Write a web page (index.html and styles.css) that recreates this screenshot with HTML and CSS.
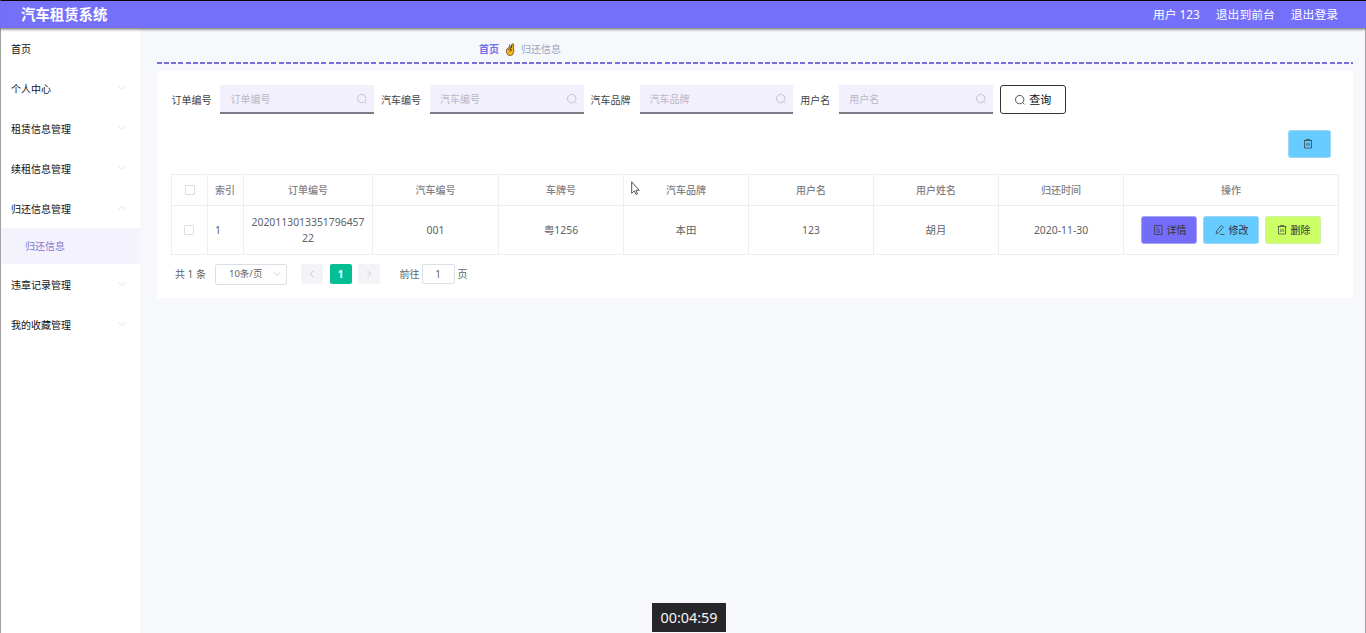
FILE: index.html
```html
<!DOCTYPE html>
<html lang="zh-CN">
<head>
<meta charset="utf-8">
<title>汽车租赁系统</title>
<link rel="stylesheet" href="styles.css">
</head>
<body>
<svg class="defs" width="0" height="0" aria-hidden="true">
  <symbol id="search" viewBox="0 0 12 12"><circle cx="5.7" cy="5.6" r="4.2"/><path d="M8.8 8.7l1.7 1.7"/></symbol>
  <symbol id="down" viewBox="0 0 12 12"><path d="M2.5 4.2L6 7.4l3.500-3.200"/></symbol>
  <symbol id="up" viewBox="0 0 12 12"><path d="M2.500 7.400L6 4.200l3.500 3.200"/></symbol>
  <symbol id="left" viewBox="0 0 12 12"><path d="M7.600 2.800L4.400 6l3.200 3.200"/></symbol>
  <symbol id="right" viewBox="0 0 12 12"><path d="M4.400 2.800L7.600 6 4.400 9.200"/></symbol>
  <symbol id="trash" viewBox="0 0 12 12"><path d="M1.800 2.500h8.400M4.300 2.500v-1h3.400v1M2.500 2.500v7.500h7v-7.500M4.900 4.800v3.200M7.100 4.800v3.200"/></symbol>
  <symbol id="doc" viewBox="0 0 12 12"><path d="M2.500 1.500h7.500v9h-7.500zM4.500 4h2M4.500 6h3.500M4.500 8h3.500"/></symbol>
  <symbol id="edit" viewBox="0 0 12 12"><path d="M2.200 9.800l.4-2.900 4.600-5.400 2.100 1.700-4.600 5.500zM6 10.500h4.500"/></symbol>
</svg>
<div class="app">
  <header class="header">
    <h1 class="brand">汽车租赁系统</h1>
    <nav class="account"><span>用户 123</span><span>退出到前台</span><span>退出登录</span></nav>
  </header>
  <div class="body">
    <aside class="sidebar">
      <div class="menu-item">首页</div>
      <div class="menu-item">个人中心<svg class="icon arrow"><use href="#down"/></svg></div>
      <div class="menu-item">租赁信息管理<svg class="icon arrow"><use href="#down"/></svg></div>
      <div class="menu-item">续租信息管理<svg class="icon arrow"><use href="#down"/></svg></div>
      <div class="menu-item">归还信息管理<svg class="icon arrow"><use href="#up"/></svg></div>
      <div class="submenu-item">归还信息</div>
      <div class="menu-item">违章记录管理<svg class="icon arrow"><use href="#down"/></svg></div>
      <div class="menu-item">我的收藏管理<svg class="icon arrow"><use href="#down"/></svg></div>
    </aside>
    <main class="main">
      <div class="breadcrumb">
        <span class="crumb-home">首页</span>
        <svg class="hand" viewBox="0 0 10 13"><path d="M1.500 6.500L3.500 4.500 6 4l.8-2.800L8.300.8l.5 1.500-.5 2.200.6 3.500L7.500 11.800 5.500 12.500 3 12 1.500 9.500z" fill="#f9b820" stroke="#4a3418" stroke-width=".7"/><path d="M4.200 1.500l1 2.500M3 6.500l3-.8.500 1.600-2.200 1M6.800 2.500l-.3 2.500" fill="none" stroke="#4a3418" stroke-width=".9"/></svg>
        <span class="crumb-current">归还信息</span>
      </div>
      <section class="card">
        <form class="filters">
          <label class="field">订单编号<span class="input-box"><input placeholder="订单编号"><svg class="icon"><use href="#search"/></svg></span></label>
          <label class="field">汽车编号<span class="input-box"><input placeholder="汽车编号"><svg class="icon"><use href="#search"/></svg></span></label>
          <label class="field">汽车品牌<span class="input-box"><input placeholder="汽车品牌"><svg class="icon"><use href="#search"/></svg></span></label>
          <label class="field">用户名<span class="input-box"><input placeholder="用户名"><svg class="icon"><use href="#search"/></svg></span></label>
          <button type="button" class="query"><svg class="icon"><use href="#search"/></svg>查询</button>
        </form>
        <div class="toolbar"><button type="button" class="btn blue bulk"><svg class="icon"><use href="#trash"/></svg></button></div>
        <div class="table">
          <div class="row head">
            <div class="cell check"><i class="box"></i></div><div class="cell index">索引</div><div class="cell">订单编号</div><div class="cell">汽车编号</div><div class="cell">车牌号</div><div class="cell">汽车品牌</div><div class="cell">用户名</div><div class="cell">用户姓名</div><div class="cell">归还时间</div><div class="cell">操作</div>
          </div>
          <div class="row data">
            <div class="cell check"><i class="box"></i></div><div class="cell index">1</div><div class="cell">2020113013351796457<br>22</div><div class="cell">001</div><div class="cell">粤1256</div><div class="cell">本田</div><div class="cell">123</div><div class="cell">胡月</div><div class="cell">2020-11-30</div>
            <div class="cell actions">
              <button type="button" class="btn purple"><svg class="icon"><use href="#doc"/></svg>详情</button>
              <button type="button" class="btn blue"><svg class="icon"><use href="#edit"/></svg>修改</button>
              <button type="button" class="btn lime"><svg class="icon"><use href="#trash"/></svg>删除</button>
            </div>
          </div>
        </div>
        <div class="pagination">
          <span class="total">共 1 条</span>
          <span class="page-size">10条/页<svg class="icon"><use href="#down"/></svg></span>
          <span class="pager prev"><svg class="icon"><use href="#left"/></svg></span>
          <span class="pager current">1</span>
          <span class="pager"><svg class="icon"><use href="#right"/></svg></span>
          <span class="goto">前往</span><span class="page-input">1</span><span class="unit">页</span>
        </div>
      </section>
    </main>
  </div>
</div>
<svg class="cursor" viewBox="0 0 9 15"><path d="M.7.800v11.500l2.600-2.400 1.700 3.600 1.500-.7-1.600-3.500h3.300z" fill="#fff" stroke="#444" stroke-width=".9"/></svg>
<div class="timer">00:04:59</div>
</body>
</html>
```
FILE: styles.css
```css
* { box-sizing: border-box; }
body {
  margin: 0;
  font: 10px/16px "Noto Sans", "Noto Sans CJK SC", sans-serif;
  color: #606266;
  overflow: hidden;
}
.defs { position: absolute; }
.icon { width: 12px; height: 12px; flex: none; fill: none; stroke: currentColor; stroke-width: .7; }
.app {
  height: 633px;
  display: flex;
  flex-direction: column;
  border: solid #a2a2a5;
  border-width: 0 1px;
  background: #f6f8fc;
}
.header {
  height: 28px;
  flex: none;
  display: flex;
  align-items: center;
  justify-content: space-between;
  padding: 0 28px 2px 20px;
  margin: 0 -1px;
  border-top: 1px solid #08070f;
  border-left: 1px solid #736ef8;
  background: #7570fa;
  color: #fff;
  box-shadow: 0 1px 3px rgba(0, 0, 0, .65);
  z-index: 1;
}
.brand { margin: 0; padding-top: 2px; font-size: 14.4px; line-height: 20px; font-weight: 700; }
.account { display: flex; gap: 16px; font-size: 11.8px; }
.body { flex: 1; display: flex; }
.sidebar { width: 139px; background: #fff; color: #111; }
.menu-item { height: 40px; display: flex; align-items: center; justify-content: space-between; padding: 1px 12px 0 10px; }
.arrow { color: #d4d6dc; margin-top: -2px; }
.submenu-item { height: 36px; line-height: 36px; padding-left: 24px; background: #f4f2fd; color: #8278d4; }
.main { flex: 1; padding: 0 12px 0 17px; }
.breadcrumb {
  height: 36px;
  padding: 6px 0 0 322px;
  display: flex;
  align-items: center;
  gap: 6px;
  background: repeating-linear-gradient(90deg, #786dda 0 5px, transparent 5px 7.150px) 0 100% / 100% 2px no-repeat;
}
.crumb-home { color: #766ee6; font-weight: 700; }
.crumb-current { color: #9aa5bc; }
.hand { width: 10px; height: 13px; }
.card { margin-top: 7px; height: 227px; padding: 14px 14px 0; background: #fff; }
.filters { display: flex; height: 29px; gap: 7px; padding-left: .4px; color: #444; }
.field { display: flex; align-items: center; gap: 9px; white-space: nowrap; }
.input-box {
  width: 153.600px;
  height: 29px;
  display: flex;
  align-items: center;
  padding: 0 6px 0 10px;
  background: #f3f0fe;
  border-bottom: 2px solid #7d7b87;
  color: #b1b0bd;
}
.input-box input { flex: 1; min-width: 0; padding: 0; border: 0; outline: 0; background: none; font: inherit; }
.input-box input::placeholder { color: #b9b7c4; }
.query {
  width: 66px;
  height: 29px;
  display: flex;
  align-items: center;
  justify-content: center;
  gap: 3px;
  padding: 1px 0 0;
  border: 1px solid #333;
  border-radius: 3px;
  background: #fff;
  color: #111;
  font: 11px/16px "Noto Sans", "Noto Sans CJK SC", sans-serif;
}
.toolbar { display: flex; justify-content: flex-end; padding: 16px 8px 16px 0; }
.btn {
  width: 56px;
  height: 28px;
  display: flex;
  align-items: center;
  justify-content: center;
  gap: 3px;
  padding: 0;
  border: 1px solid rgba(220, 223, 230, .5);
  border-radius: 3px;
  color: #333;
  font: 10px/16px "Noto Sans", "Noto Sans CJK SC", sans-serif;
}
.purple { background: #736df9; }
.blue { background: #66ccff; }
.lime { background: #ccff66; }
.btn.bulk { width: 43px; padding-right: 4px; }
.table { width: 1168px; border: solid #ebeef2; border-width: 1px 0 0 1px; }
.row { display: grid; grid-template-columns: 36px 36px 129px 126px repeat(5, 125px) 215px; }
.head { height: 31px; color: #7f8186; font-weight: 500; }
.data { height: 49px; }
.cell { display: flex; align-items: center; justify-content: center; text-align: center; border: solid #ebeef2; border-width: 0 1px 1px 0; }
.index { justify-content: flex-start; padding-left: 7px; }
.box { width: 10px; height: 10px; border: 1px solid #dcdfe6; border-radius: 1px; background: #fff; }
.data .box { margin-right: 2px; }
.actions { gap: 6px; }
.data .cell { font-size: 10.400px; }
.pagination { display: flex; align-items: center; height: 38px; padding-left: 4px; }
.total { width: 30px; white-space: nowrap; }
.page-size {
  width: 72px;
  height: 21px;
  margin-left: 10px;
  display: flex;
  align-items: center;
  justify-content: space-between;
  padding: 0 3px 0 13px;
  border: 1px solid #dcdfe6;
  border-radius: 2px;
  font-size: 9.500px;
}
.page-size .icon { color: #b8bbc2; }
.pager { width: 22px; height: 20px; display: flex; align-items: center; justify-content: center; margin-right: 6.500px; border-radius: 2px; background: #f4f4f8; color: #b0b2b8; }
.prev { margin-left: 14px; }
.current { background: #04bf94; color: #fff; font-weight: 700; }
.goto { margin: 0 2px 0 13px; }
.page-input { width: 33px; height: 20px; line-height: 18px; text-align: center; border: 1px solid #dcdfe6; border-radius: 2px; }
.unit { margin-left: 3px; }
.cursor { position: absolute; left: 631px; top: 181px; width: 9px; height: 15px; }
.timer {
  position: absolute;
  left: 652px;
  top: 603px;
  width: 74px;
  height: 29px;
  background: #26262b;
  color: #f4f4f4;
  font-size: 14.400px;
  line-height: 29px;
  text-align: center;
}
```
